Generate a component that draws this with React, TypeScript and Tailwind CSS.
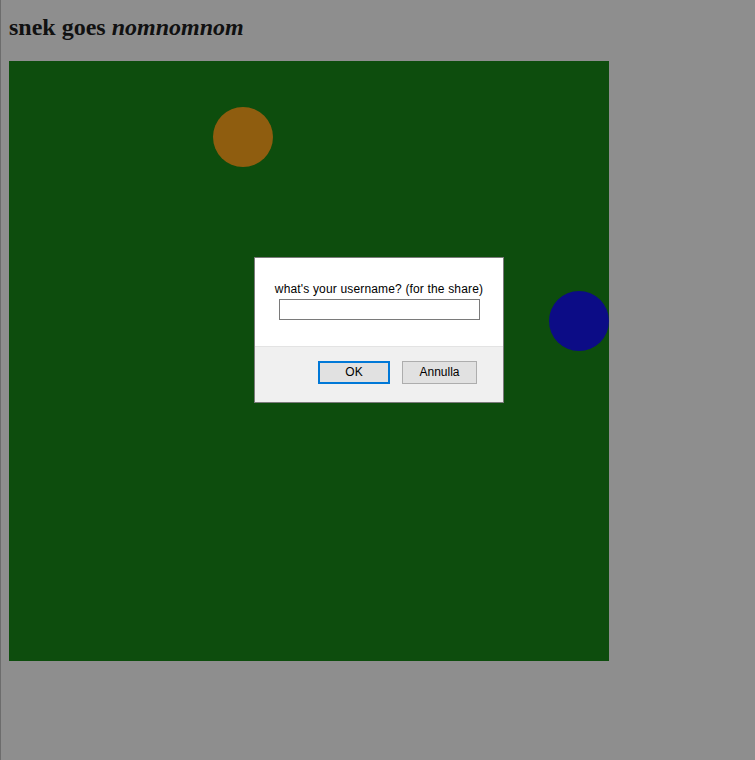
export default function App() {
  return (
    <div className="relative min-h-[760px] w-full bg-[#8e8e8e] border-l border-[#6c6c6c]">
      <div className="pl-[8px] pt-[13px]">
        <h2 className="font-['Liberation_Serif',serif] text-[24px] font-bold leading-[28px] text-[#111]">
          snek goes <em>nomnomnom</em>
        </h2>
        <div className="relative mt-[20px] h-[600px] w-[600px] bg-[#0d4d0d]">
          <div className="absolute left-[204px] top-[46px] h-[60px] w-[60px] rounded-full bg-[#8f5d0f]" />
          <div className="absolute left-[540px] top-[230px] h-[60px] w-[60px] rounded-full bg-[#0c0c86]" />
        </div>
      </div>

      <div className="absolute left-[253px] top-[257px] w-[250px] border border-[#7a7a7a] bg-white font-['Liberation_Sans',Arial,sans-serif] text-[12px] text-black">
        <div className="flex flex-col items-center pb-[26px] pt-[24px]">
          <p className="leading-[15px] tracking-[0.16px]">what's your username? (for the share)</p>
          <div className="mt-[2px] h-[21px] w-[201px] border border-[#7a7a7a] bg-white" />
        </div>
        <div className="flex h-[56px] justify-end gap-[12px] border-t border-[#e3e3e3] bg-[#f0f0f0] pr-[26px] pt-[14px]">
          <button className="h-[23px] w-[72px] border-2 border-[#0078d7] bg-[#e1e1e1] leading-[19px]">OK</button>
          <button className="h-[23px] w-[75px] border border-[#adadad] bg-[#e1e1e1] leading-[21px]">Annulla</button>
        </div>
      </div>
    </div>
  );
}
